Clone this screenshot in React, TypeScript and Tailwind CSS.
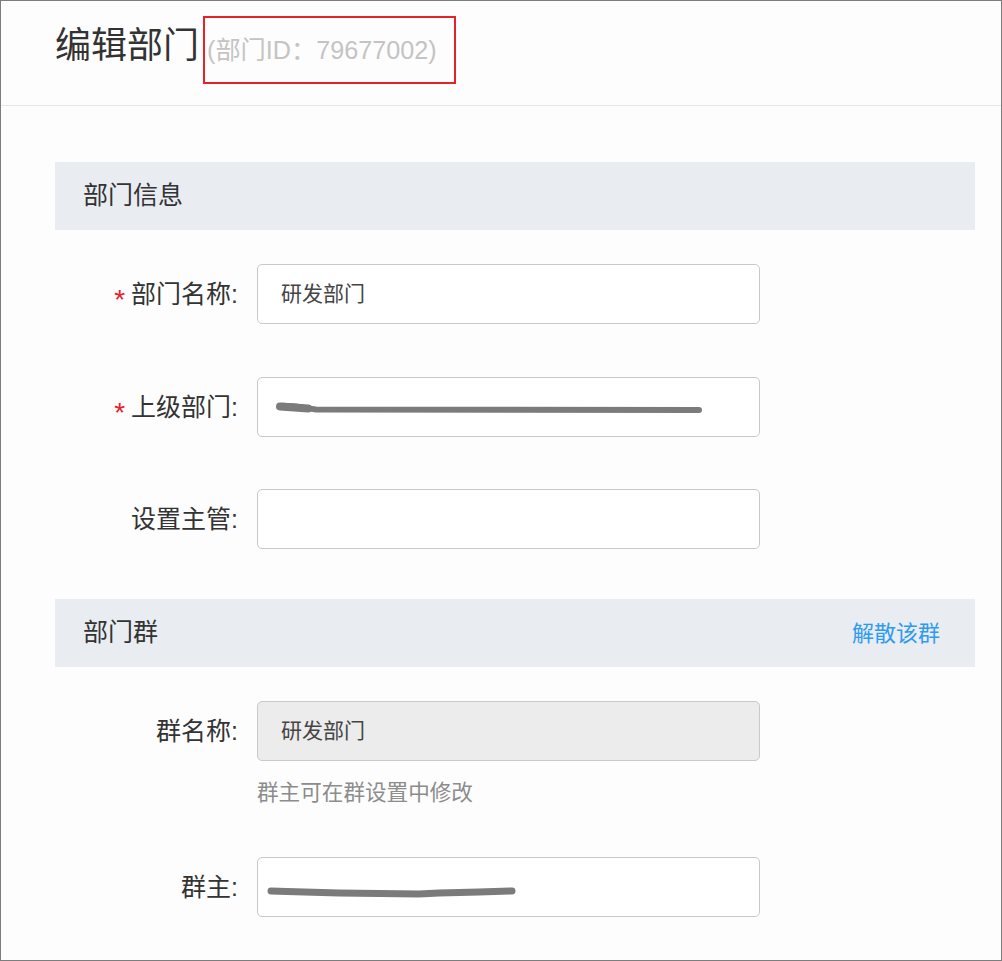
const font = '"Liberation Sans", "Noto Sans CJK SC", sans-serif';

function Label({ text, required }: { text: string; required?: boolean }) {
  return (
    <div className="w-[183px] flex items-center justify-end text-[25px] leading-[30px] text-[#333]">
      {required && (
        <span className="text-[#e8202a] text-[28px] leading-[30px] mr-[6px] translate-y-[6px]">*</span>
      )}
      <span>{text}</span>
    </div>
  );
}

function Field({ children, disabled }: { children?: React.ReactNode; disabled?: boolean }) {
  return (
    <div
      className={`ml-[19px] w-[503px] h-[60px] rounded-[5px] border border-[#c9c9c9] flex items-center pl-[23px] text-[21px] text-[#444] ${
        disabled ? 'bg-[#ececec]' : 'bg-white'
      }`}
    >
      {children}
    </div>
  );
}

function SectionHeader({ title, action }: { title: string; action?: string }) {
  return (
    <div className="w-[920px] h-[68px] bg-[#e9ecf1] flex items-center justify-between pl-[28px] pr-[35px]">
      <span className="text-[25px] text-[#333]">{title}</span>
      {action && <span className="text-[22px] text-[#2e9bf0]">{action}</span>}
    </div>
  );
}

export default function App() {
  return (
    <div className="w-[1002px] h-[961px] border border-[#7d7d7d] bg-[#fdfdfd] overflow-hidden" style={{ fontFamily: font }}>
      {/* header */}
      <div className="h-[105px] border-b border-[#e6e6e6] flex items-start pt-[15px] pl-[54px]">
        <h1 className="mt-[10px] text-[36px] leading-[40px] text-[#333]">编辑部门</h1>
        <div className="ml-[4px] w-[253px] h-[68px] border-2 border-[#e8202a] flex items-center pl-[2px] pt-[2px]">
          <span className="text-[25.2px] text-[#c4c4c4]">(部门ID：79677002)</span>
        </div>
      </div>

      <div className="px-[54px] pt-[56px]">
        <SectionHeader title="部门信息" />

        <div className="flex items-center mt-[34px]">
          <Label text="部门名称:" required />
          <Field>研发部门</Field>
        </div>

        <div className="flex items-center mt-[53px]">
          <Label text="上级部门:" required />
          <Field>
            <svg width="440" height="20" viewBox="0 0 440 20" className="-ml-[5px] mt-[3px]">
              <path d="M4 7 C 14 6, 28 9, 40 10.5 L 423 11" fill="none" stroke="#7b7b7b" strokeWidth="6" strokeLinecap="round" />
              <path d="M4 7.5 L 32 9.5" fill="none" stroke="#7b7b7b" strokeWidth="8" strokeLinecap="round" />
            </svg>
          </Field>
        </div>

        <div className="flex items-center mt-[52px]">
          <Label text="设置主管:" />
          <Field />
        </div>

        <div className="mt-[50px]">
          <SectionHeader title="部门群" action="解散该群" />
        </div>

        <div className="flex items-center mt-[34px]">
          <Label text="群名称:" />
          <Field disabled>研发部门</Field>
        </div>

        <div className="ml-[202px] mt-[17px] text-[21.6px] leading-[30px] text-[#8c8c8c]">群主可在群设置中修改</div>

        <div className="flex items-center mt-[49px]">
          <Label text="群主:" />
          <Field>
            <svg width="260" height="20" viewBox="0 0 260 20" className="-ml-[14px] mt-[4px]">
              <path d="M4 12 L 20 12.5 L 72 14 L 152 15 L 172 14 L 212 13 L 245 12" fill="none" stroke="#7b7b7b" strokeWidth="7" strokeLinecap="round" strokeLinejoin="round" />
            </svg>
          </Field>
        </div>
      </div>
    </div>
  );
}
